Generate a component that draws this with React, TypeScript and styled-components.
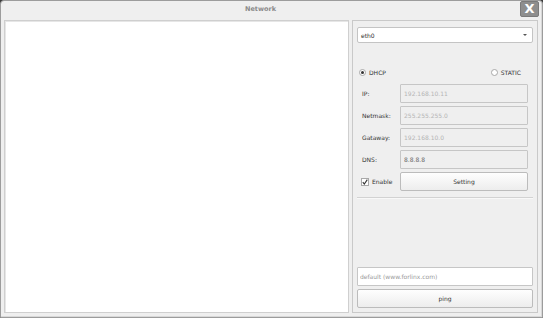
import React, { useState } from 'react';
import styled, { createGlobalStyle } from 'styled-components';

const GlobalStyle = createGlobalStyle`
  html, body {
    margin: 0;
    padding: 0;
    background: #3a3a3a;
  }
  * {
    box-sizing: border-box;
  }
`;

const Window = styled.div`
  width: 543px;
  height: 318px;
  background: #efefef;
  border: 1px solid #9c9c9c;
  border-radius: 4px 4px 0 0;
  box-shadow: inset -1px -1px 0 #d8d8d8;
  display: flex;
  flex-direction: column;
  font-family: 'DejaVu Sans', sans-serif;
  font-size: 6px;
  color: #3c3c3c;
`;

const TitleBar = styled.div`
  position: relative;
  height: 18px;
  display: flex;
  align-items: center;
  justify-content: center;
  padding: 0 22px 2px 0;
`;

const Title = styled.span`
  font-weight: bold;
  font-size: 6.5px;
  color: #8a8a8a;
`;

const CloseButton = styled.button`
  position: absolute;
  right: 3px;
  top: 0;
  width: 19px;
  height: 16px;
  padding: 0;
  border: 1px solid #7a7a7a;
  border-radius: 2px;
  background: #8e8e8e;
  color: #ffffff;
  font-family: 'DejaVu Sans', sans-serif;
  font-weight: bold;
  font-size: 13px;
  line-height: 14px;
  cursor: pointer;
`;

const Body = styled.div`
  flex: 1;
  display: flex;
  gap: 3px;
  padding: 1px 4px 4px 3px;
`;

const OutputPanel = styled.div`
  width: 345px;
  background: #ffffff;
  border: 1px solid #cfcfcf;
  box-shadow: inset 1px 1px 0 #e6e6e6;
`;

const SidePanel = styled.div`
  flex: 1;
  border: 1px solid #c9c9c9;
  padding: 6px 4px 4px 4px;
  display: flex;
  flex-direction: column;
`;

const Combo = styled.div`
  height: 16px;
  background: #ffffff;
  border: 1px solid #c4c4c4;
  border-radius: 2px;
  display: flex;
  align-items: center;
  justify-content: space-between;
  padding: 0 5px 0 3px;
  color: #2e2e2e;
`;

const Arrow = styled.span`
  width: 0;
  height: 0;
  border-left: 2px solid transparent;
  border-right: 2px solid transparent;
  border-top: 2px solid #555;
`;

const ModeRow = styled.div`
  margin-top: 26px;
  display: flex;
  justify-content: space-between;
  align-items: center;
  padding: 0 12px 0 2px;
`;

const RadioLabel = styled.label`
  display: flex;
  align-items: center;
  gap: 3px;
  cursor: pointer;
  color: #333;
`;

const RadioDot = styled.span<{ $on: boolean }>`
  width: 7px;
  height: 7px;
  border-radius: 50%;
  border: 1px solid #a8a8a8;
  background: #ffffff;
  display: flex;
  align-items: center;
  justify-content: center;
  &::after {
    content: '';
    width: 3px;
    height: 3px;
    border-radius: 50%;
    background: ${(p) => (p.$on ? '#333' : 'transparent')};
  }
`;

const Form = styled.div`
  margin-top: 8px;
  display: grid;
  grid-template-columns: 43px 1fr;
  row-gap: 3px;
  align-items: center;
  padding-right: 5px;
`;

const FieldLabel = styled.span`
  padding-left: 5px;
  color: #333;
`;

const Field = styled.input<{ $dim?: boolean }>`
  height: 19px;
  width: 100%;
  border: 1px solid #c6c6c6;
  border-radius: 1px;
  background: #efefef;
  font-family: 'DejaVu Sans', sans-serif;
  font-size: 6px;
  padding: 0 3px;
  color: ${(p) => (p.$dim ? '#b5b5b5' : '#6a6a6a')};
  outline: none;
`;

const CheckLabel = styled.label`
  display: flex;
  align-items: center;
  gap: 3px;
  padding-left: 4px;
  color: #333;
`;

const CheckBox = styled.span`
  width: 8px;
  height: 8px;
  border: 1px solid #a8a8a8;
  background: #ffffff;
  display: flex;
  align-items: center;
  justify-content: center;
`;

const PushButton = styled.button`
  height: 19px;
  width: 100%;
  border: 1px solid #bcbcbc;
  border-radius: 2px;
  background: linear-gradient(#fefefe, #ededed);
  font-family: 'DejaVu Sans', sans-serif;
  font-size: 6px;
  color: #333;
  padding: 0;
  cursor: pointer;
`;

const Divider = styled.div`
  margin-top: 6px;
  height: 2px;
  border-top: 1px solid #d2d2d2;
  border-bottom: 1px solid #f8f8f8;
`;

const Spacer = styled.div`
  flex: 1;
`;

const HostInput = styled.input`
  height: 19px;
  width: 100%;
  background: #ffffff;
  border: 1px solid #c6c6c6;
  border-radius: 1px;
  font-family: 'DejaVu Sans', sans-serif;
  font-size: 6px;
  padding: 0 2px;
  color: #333;
  outline: none;
  &::placeholder {
    color: #9a9a9a;
  }
`;

const BottomGroup = styled.div`
  display: flex;
  flex-direction: column;
  gap: 3px;
`;

export default function App() {
  const [mode, setMode] = useState<'dhcp' | 'static'>('dhcp');
  const dim = mode === 'dhcp';

  return (
    <>
      <GlobalStyle />
      <Window>
        <TitleBar>
          <Title>Network</Title>
          <CloseButton>X</CloseButton>
        </TitleBar>
        <Body>
          <OutputPanel />
          <SidePanel>
            <Combo>
              <span>eth0</span>
              <Arrow />
            </Combo>
            <ModeRow>
              <RadioLabel onClick={() => setMode('dhcp')}>
                <RadioDot $on={mode === 'dhcp'} />
                DHCP
              </RadioLabel>
              <RadioLabel onClick={() => setMode('static')}>
                <RadioDot $on={mode === 'static'} />
                STATIC
              </RadioLabel>
            </ModeRow>
            <Form>
              <FieldLabel>IP:</FieldLabel>
              <Field $dim={dim} readOnly value="192.168.10.11" />
              <FieldLabel>Netmask:</FieldLabel>
              <Field $dim={dim} readOnly value="255.255.255.0" />
              <FieldLabel>Gataway:</FieldLabel>
              <Field $dim={dim} readOnly value="192.168.10.0" />
              <FieldLabel>DNS:</FieldLabel>
              <Field readOnly value="8.8.8.8" />
              <CheckLabel>
                <CheckBox>
                  <svg width="6" height="6" viewBox="0 0 6 6">
                    <path d="M0.8 3.2 L2.3 5 L5.3 0.6" fill="none" stroke="#333" strokeWidth="1.1" />
                  </svg>
                </CheckBox>
                Enable
              </CheckLabel>
              <PushButton>Setting</PushButton>
            </Form>
            <Divider />
            <Spacer />
            <BottomGroup>
              <HostInput placeholder="default (www.forlinx.com)" />
              <PushButton>ping</PushButton>
            </BottomGroup>
          </SidePanel>
        </Body>
      </Window>
    </>
  );
}
